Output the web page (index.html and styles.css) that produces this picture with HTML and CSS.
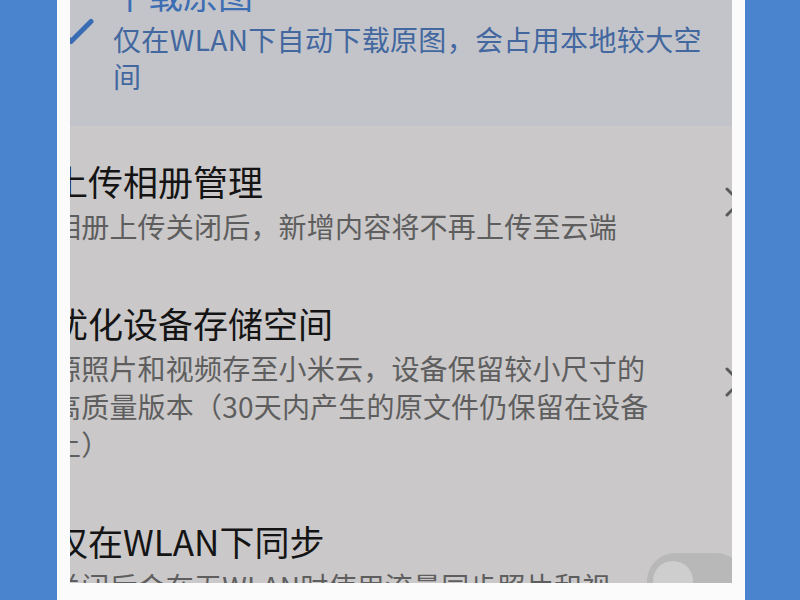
FILE: index.html
```html
<!DOCTYPE html>
<html lang="zh-CN">
<head>
<meta charset="utf-8">
<title>相册设置</title>
<link rel="stylesheet" href="styles.css">
</head>
<body>
<div class="phone">
  <div class="screen">
    <div class="content">
      <div class="selected">
        <div class="check">
          <svg width="60" height="40" viewBox="0 0 60 40"><path d="M7 16.5 L18 27.5 L38 7.5" fill="none" stroke="#3a6cb4" stroke-width="5" stroke-linecap="round" stroke-linejoin="round"/></svg>
        </div>
        <div class="text">
          <div class="sel-title">下载原图</div>
          <div class="sel-sub">仅在WLAN下自动下载原图，会占用本地较大空<br>间</div>
        </div>
      </div>
      <div class="rows">
        <div class="row">
          <div class="text">
            <div class="title">上传相册管理</div>
            <div class="sub">相册上传关闭后，新增内容将不再上传至云端</div>
          </div>
          <svg class="chev" width="18" height="30" viewBox="0 0 18 30"><path d="M2 2 L15 15 L2 28" fill="none" stroke="#5a5a5a" stroke-width="3" stroke-linecap="round" stroke-linejoin="round"/></svg>
        </div>
        <div class="row">
          <div class="text">
            <div class="title">优化设备存储空间</div>
            <div class="sub">源照片和视频存至小米云，设备保留较小尺寸的<br>高质量版本（30天内产生的原文件仍保留在设备<br>上）</div>
          </div>
          <svg class="chev" width="18" height="30" viewBox="0 0 18 30"><path d="M2 2 L15 15 L2 28" fill="none" stroke="#5a5a5a" stroke-width="3" stroke-linecap="round" stroke-linejoin="round"/></svg>
        </div>
        <div class="row">
          <div class="text">
            <div class="title">仅在WLAN下同步</div>
            <div class="sub">关闭后会在无WLAN时使用流量同步照片和视<br>频</div>
          </div>
          <div class="toggle"><div class="knob"></div></div>
        </div>
      </div>
    </div>
  </div>
</div>
</body>
</html>
```

FILE: styles.css
```css
html, body {
  margin: 0;
  padding: 0;
}
body {
  background: #4a84cf;
  height: 600px;
  overflow: hidden;
  font-family: "Noto Sans CJK SC", "Noto Sans", sans-serif;
}
.phone {
  margin-left: 57px;
  width: 688px;
  height: 600px;
  box-sizing: border-box;
  padding: 0 13px;
  background: #fbfbfb;
}
.screen {
  height: 583px;
  overflow: hidden;
  background: #cac8c9;
}
.content {
  margin: -28px -12px 0 -17px;
}
.selected {
  display: flex;
  align-items: center;
  background: #c2c4ca;
  padding-bottom: 31px;
}
.check {
  width: 60px;
  flex: none;
  display: flex;
}
.sel-title {
  font-size: 35px;
  line-height: 44px;
  color: #3d6db3;
  margin-bottom: 5px;
}
.sel-sub {
  font-size: 28px;
  line-height: 37px;
  color: #43679f;
  white-space: nowrap;
  letter-spacing: 0.35px;
}
.rows {
  padding-top: 5px;
}
.row {
  display: flex;
  align-items: center;
  padding: 28px 1px 28px 0;
}
.row .text {
  flex: 1;
}
.title {
  font-size: 35px;
  line-height: 44px;
  color: #141414;
  margin-bottom: 4px;
  white-space: nowrap;
}
.sub {
  font-size: 28px;
  line-height: 38px;
  color: #5e5e5e;
  white-space: nowrap;
  letter-spacing: 0.2px;
}
.chev {
  flex: none;
}
.toggle {
  flex: none;
  width: 97px;
  height: 56px;
  border-radius: 28px;
  background: #b9b8b9;
  display: flex;
  align-items: center;
  margin-right: -1px;
}
.knob {
  width: 40px;
  height: 40px;
  border-radius: 50%;
  background: #cfcecf;
  margin-left: 6px;
}
```
